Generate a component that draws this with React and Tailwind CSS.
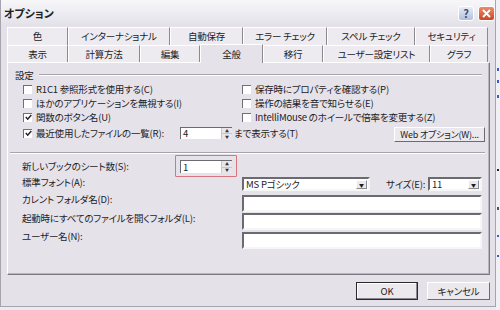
import React from 'react';

const row1 = [
  { label: '色', w: 61 },
  { label: 'インターナショナル', w: 102 },
  { label: '自動保存', w: 73 },
  { label: 'エラー チェック', w: 84 },
  { label: 'スペル チェック', w: 88 },
  { label: 'セキュリティ', w: 73 },
];

const row2 = [
  { label: '表示', w: 61 },
  { label: '計算方法', w: 72 },
  { label: '編集', w: 60 },
  { label: '全般', w: 63, active: true },
  { label: '移行', w: 60 },
  { label: 'ユーザー設定リスト', w: 107 },
  { label: 'グラフ', w: 58 },
];

const Tab = ({ label, w, active }) => (
  <div
    style={{ width: w }}
    className={`flex items-center justify-center whitespace-nowrap border-l border-t border-r border-l-white border-t-white border-r-[#8a8a90] ${
      active ? 'bg-[#e6e2ea] -mt-[2px] relative z-10 h-[19px] -mb-[1px]' : 'bg-[#edeaf0] h-full'
    }`}
  >
    {label}
  </div>
);

const CheckBox = ({ checked }) => (
  <div className="w-[9px] h-[9px] shrink-0 bg-white border-t border-l border-[#6f6f75] border-b-white border-r-white flex items-center justify-center">
    {checked && (
      <svg width="7" height="7" viewBox="0 0 7 7">
        <path d="M0.8 3 L2.7 5.2 L6.3 1" stroke="#222" strokeWidth="1.5" fill="none" />
      </svg>
    )}
  </div>
);

const Check = ({ checked, children }) => (
  <div className="flex items-center gap-[4px] h-[14px] whitespace-nowrap">
    <CheckBox checked={checked} />
    <span>{children}</span>
  </div>
);

const Spin = ({ value, className = '' }) => (
  <div className={`flex bg-white border-t border-l border-[#6b6b70] border-b-[#f2f2f2] border-r-[#f2f2f2] ${className}`}>
    <div className="flex-1 pl-[2px] leading-[11px] flex items-center">{value}</div>
    <div className="w-[11px] flex flex-col bg-[#e8e5eb] border-l border-[#c8c5cc]">
      <div className="flex-1 flex items-center justify-center text-[4px] leading-none text-[#333]">▲</div>
      <div className="flex-1 flex items-center justify-center text-[4px] leading-none text-[#333] border-t border-[#c8c5cc]">▼</div>
    </div>
  </div>
);

const Field = ({ children, className = '' }) => (
  <div className={`bg-white border-2 border-t-[#6a6a70] border-l-[#6a6a70] border-b-[#f6f6f6] border-r-[#f6f6f6] flex items-center ${className}`}>
    {children}
  </div>
);

const Select = ({ value, className = '' }) => (
  <Field className={className}>
    <span className="flex-1 pl-[2px] leading-[10px] whitespace-nowrap">{value}</span>
    <div className="w-[11px] h-[9px] mr-[1px] bg-[#ebe8ee] border border-t-white border-l-white border-b-[#8a8a90] border-r-[#8a8a90] flex items-center justify-center text-[5px] leading-none">▼</div>
  </Field>
);

export default function App() {
  return (
    <div className="w-[500px] h-[310px] flex overflow-hidden bg-[#eceaf0] text-[9.5px] tracking-[-0.2px] text-[#1c1c1e] font-['Noto_Sans_CJK_JP','Noto_Sans_CJK_SC',sans-serif] [font-feature-settings:'palt']">
      <div className="w-[496px] shrink-0 h-[307px] flex flex-col bg-[#e5e1e9] border-l border-r border-b border-[#a6a4ac]">
        {/* title bar */}
        <div className="h-[24px] pt-[3px] flex items-center justify-between bg-gradient-to-b from-[#f7f7fa] to-[#e4e3ea]">
          <span className="pl-[3px] text-[11px] tracking-normal font-bold text-[#222]">オプション</span>
          <div className="flex gap-[4px]">
            <div className="w-[16px] h-[15px] rounded-[3px] border border-white bg-gradient-to-b from-[#e6ecf6] to-[#b4c0d8] flex items-center justify-center text-[11px] font-bold text-[#3d4d78] leading-none">?</div>
            <div className="w-[17px] h-[15px] rounded-[3px] border border-white bg-gradient-to-b from-[#ef8a66] to-[#cc4426] flex items-center justify-center">
              <svg width="9" height="9" viewBox="0 0 9 9">
                <path d="M1 1 L8 8 M8 1 L1 8" stroke="#fff" strokeWidth="1.8" />
              </svg>
            </div>
          </div>
        </div>

        {/* body */}
        <div className="flex-1 flex flex-col pt-[3px] pl-[6px] pr-[5px]">
          <div className="flex h-[18px]">
            {row1.map((t) => (
              <Tab key={t.label} {...t} />
            ))}
          </div>
          <div className="flex h-[17px] items-end">
            {row2.map((t) => (
              <Tab key={t.label} {...t} />
            ))}
          </div>

          {/* panel */}
          <div className="h-[213px] flex flex-col bg-[#e6e2ea] border border-t-white border-l-white border-r-[#7c7a82] border-b-[#7c7a82] shadow-[inset_-1px_-1px_0_#b9b6bf]">
            <div className="mt-[6px] h-[12px] flex items-center pl-[7px] pr-[7px]">
              <span className="leading-[12px]">設定</span>
              <div className="flex-1 ml-[5px] border-t border-b border-t-[#a7a4ad] border-b-white" />
            </div>

            <div className="mt-[1px] pl-[15px] grid grid-cols-[219px_1fr]">
              <Check>R1C1 参照形式を使用する(C)</Check>
              <Check>保存時にプロパティを確認する(P)</Check>
              <Check>ほかのアプリケーションを無視する(I)</Check>
              <Check>操作の結果を音で知らせる(E)</Check>
              <Check checked>関数のボタン名(U)</Check>
              <Check>IntelliMouse のホイールで倍率を変更する(Z)</Check>
            </div>

            <div className="h-[18px] pl-[15px] pr-[4px] flex items-center whitespace-nowrap">
              <CheckBox checked />
              <span className="ml-[4px] w-[144px]">最近使用したファイルの一覧(R):</span>
              <Spin value="4" className="w-[52px] h-[12px]" />
              <span className="ml-[2px]">まで表示する(T)</span>
              <div className="flex-1" />
              <div className="w-[91px] h-[15px] mt-[3px] flex items-center justify-center bg-[#ebe8ee] border border-t-white border-l-white border-b-[#6c6a72] border-r-[#6c6a72] text-[9px]">
                Web オプション(W)...
              </div>
            </div>

            <div className="mt-[10px] ml-[2px] mr-[4px] border-t border-b border-t-[#a7a4ad] border-b-white" />

            <div className="mt-[1px] h-[22px] pl-[14px] flex items-center whitespace-nowrap">
              <span className="w-[153px]">新しいブックのシート数(S):</span>
              <div className="w-[62px] h-[22px] border-[1.5px] border-[#d9737d] rounded-[1px] pt-[4px] pl-[4px] pr-[4px]">
                <Spin value="1" className="h-[13px]" />
              </div>
            </div>

            <div className="h-[14px] pl-[14px] flex items-center whitespace-nowrap">
              <span className="w-[220px] -mt-[4px]">標準フォント(A):</span>
              <Select value="MS Pゴシック" className="w-[128px] h-[14px]" />
              <span className="ml-[16px] w-[42px]">サイズ(E):</span>
              <Select value="11" className="w-[54px] h-[14px]" />
            </div>

            <div className="mt-[4px] h-[17px] pl-[14px] flex items-start whitespace-nowrap">
              <span className="w-[220px] leading-[12px] -mt-[2px]">カレント フォルダ名(D):</span>
              <Field className="w-[240px] h-[17px]" />
            </div>
            <div className="mt-[1px] h-[17px] pl-[14px] flex items-start whitespace-nowrap">
              <span className="w-[220px] leading-[12px] -mt-[1px]">起動時にすべてのファイルを開くフォルダ(L):</span>
              <Field className="w-[240px] h-[17px]" />
            </div>
            <div className="mt-[2px] h-[17px] pl-[14px] flex items-start whitespace-nowrap">
              <span className="w-[220px] leading-[12px] -mt-[2px]">ユーザー名(N):</span>
              <Field className="w-[240px] h-[17px]" />
            </div>
          </div>

          {/* buttons */}
          <div className="mt-[7px] flex justify-end gap-[9px]">
            <div className="w-[62px] h-[18px] flex items-center justify-center bg-[#ebe8ee] border border-[#2a2a2e] shadow-[inset_-1px_-1px_0_#8a8890,inset_1px_1px_0_#fff]">
              OK
            </div>
            <div className="w-[63px] h-[18px] flex items-center justify-center bg-[#ebe8ee] border border-t-white border-l-white border-b-[#6c6a72] border-r-[#6c6a72]">
              キャンセル
            </div>
          </div>
        </div>
      </div>

      {/* neighbouring window edge */}
      <div className="flex-1 flex flex-col bg-[#f1f0f4] pl-[1px]">
        <div className="mt-[68px] w-[2px] h-[3px] bg-[#3b5bd0]" />
        <div className="mt-[9px] w-[2px] h-[3px] bg-[#3b5bd0]" />
        <div className="mt-[12px] w-[2px] h-[3px] bg-[#3b5bd0]" />
        <div className="mt-[71px] w-[2px] h-[2px] bg-[#222]" />
        <div className="mt-[36px] w-[2px] h-[3px] bg-[#555]" />
        <div className="mt-[25px] w-[2px] h-[2px] bg-[#3b5bd0]" />
        <div className="mt-[18px] w-[2px] h-[2px] bg-[#3b5bd0]" />
      </div>
    </div>
  );
}
